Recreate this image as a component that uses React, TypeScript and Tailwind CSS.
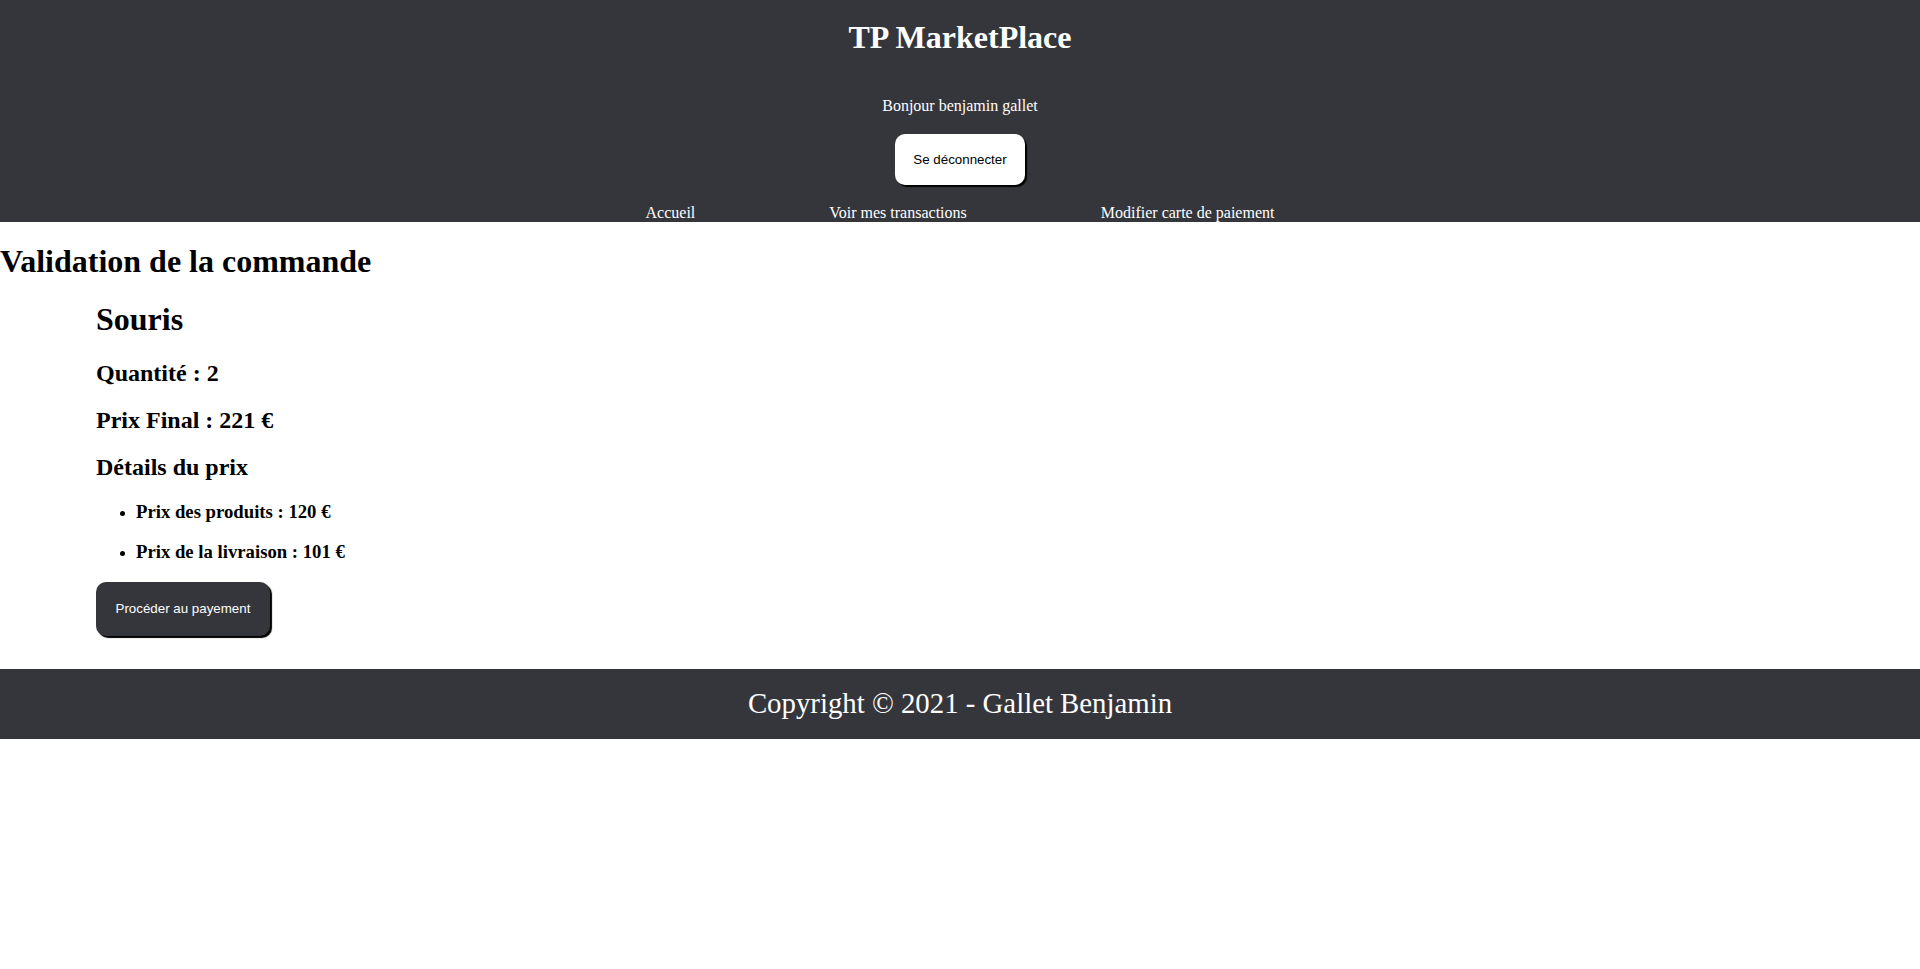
const dark = "bg-[#35363b]";

function Header() {
  return (
    <header className={`${dark} text-white text-center pt-[18.5px]`}>
      <h1 className="text-[32px] font-bold leading-[normal]">TP MarketPlace</h1>
      <p className="mt-[41px] text-[16px] leading-[normal]">Bonjour benjamin gallet</p>
      <div className="mt-[19px] flex justify-center">
        <button
          type="button"
          className="bg-white text-black px-[18px] py-[18px] rounded-[10px] shadow-[2px_2px_1px_#000] font-['Liberation_Sans',Arial,sans-serif] text-[13.33px] leading-[normal]"
        >
          Se déconnecter
        </button>
      </div>
      <nav className="mt-[19px] flex justify-center gap-[134px] text-[16px] leading-[normal]">
        <a href="#">Accueil</a>
        <a href="#">Voir mes transactions</a>
        <a href="#">Modifier carte de paiement</a>
      </nav>
    </header>
  );
}

function OrderSummary() {
  return (
    <section className="ml-24">
      <h1 className="text-[32px] font-bold leading-[normal] my-[21.44px]">Souris</h1>
      <h2 className="text-[24px] font-bold leading-[normal] my-[19.92px]">Quantité : 2</h2>
      <h2 className="text-[24px] font-bold leading-[normal] my-[19.92px]">Prix Final : 221 €</h2>
      <h2 className="text-[24px] font-bold leading-[normal] my-[19.92px]">Détails du prix</h2>
      <ul className="list-disc pl-10 my-4 text-[16px] leading-[normal]">
        <li>
          <h3 className="text-[18.72px] font-bold leading-[normal] my-[18.72px]">Prix des produits : 120 €</h3>
        </li>
        <li>
          <h3 className="text-[18.72px] font-bold leading-[normal] my-[18.72px]">Prix de la livraison : 101 €</h3>
        </li>
      </ul>
      <button
        type="button"
        className={`block ${dark} text-white px-[19.5px] py-[19.5px] rounded-[10px] shadow-[2px_2px_1px_#000] font-['Liberation_Sans',Arial,sans-serif] text-[13.33px] leading-[normal]`}
      >
        Procéder au payement
      </button>
    </section>
  );
}

export default function App() {
  return (
    <div className="font-['Liberation_Serif','Times_New_Roman',serif] text-black bg-white min-h-[969px]">
      <Header />
      <main>
        <h1 className="text-[32px] font-bold leading-[normal] my-[21.44px]">Validation de la commande</h1>
        <OrderSummary />
      </main>
      <footer className={`${dark} mt-[33px] h-[70px] flex items-center justify-center text-white text-[28.8px] leading-[normal]`}>
        Copyright © 2021 - Gallet Benjamin
      </footer>
    </div>
  );
}
